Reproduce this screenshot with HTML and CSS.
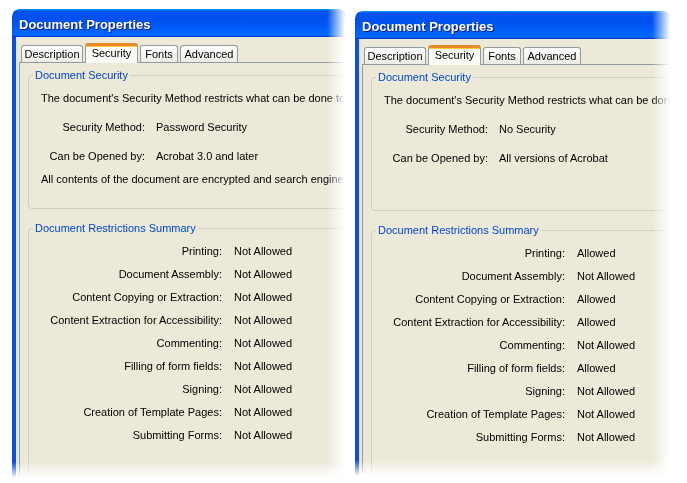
FILE: index.html
```html
<!DOCTYPE html>
<html>
<head>
    <title>Document Properties - Security</title>
    <link rel="stylesheet" href="styles.css">
</head>
<body>
    <div class="desk">
        <div class="window">
            <div class="titlebar">Document Properties</div>
            <div class="frame">
                <div class="tabs">
                    <span class="tab tab-description">Description</span>
                    <span class="tab tab-security active">Security</span>
                    <span class="tab tab-fonts">Fonts</span>
                    <span class="tab tab-advanced">Advanced</span>
                </div>
                <div class="panel">
                    <fieldset class="group group-security">
                        <legend>Document Security</legend>
                        <p class="intro">The document's Security Method restricts what can be done to the document. To remove security restrictions, set the Security Method to No Security.</p>
                        <div class="pairs">
                            <span class="key">Security Method:</span><span>Password Security</span>
                            <span class="key">Can be Opened by:</span><span>Acrobat 3.0 and later</span>
                        </div>
                        <p class="note">All contents of the document are encrypted and search engines cannot access the document's metadata.</p>
                    </fieldset>
                    <fieldset class="group group-rules">
                        <legend>Document Restrictions Summary</legend>
                        <div class="rules">
                            <span class="key">Printing:</span><span>Not Allowed</span>
                            <span class="key">Document Assembly:</span><span>Not Allowed</span>
                            <span class="key">Content Copying or Extraction:</span><span>Not Allowed</span>
                            <span class="key">Content Extraction for Accessibility:</span><span>Not Allowed</span>
                            <span class="key">Commenting:</span><span>Not Allowed</span>
                            <span class="key">Filling of form fields:</span><span>Not Allowed</span>
                            <span class="key">Signing:</span><span>Not Allowed</span>
                            <span class="key">Creation of Template Pages:</span><span>Not Allowed</span>
                            <span class="key">Submitting Forms:</span><span>Not Allowed</span>
                        </div>
                    </fieldset>
                </div>
            </div>
        </div>

        <div class="window window-second">
            <div class="titlebar">Document Properties</div>
            <div class="frame">
                <div class="tabs">
                    <span class="tab tab-description">Description</span>
                    <span class="tab tab-security active">Security</span>
                    <span class="tab tab-fonts">Fonts</span>
                    <span class="tab tab-advanced">Advanced</span>
                </div>
                <div class="panel">
                    <fieldset class="group group-security">
                        <legend>Document Security</legend>
                        <p class="intro">The document's Security Method restricts what can be done to the document. To add security to the document, set the Security Method.</p>
                        <div class="pairs">
                            <span class="key">Security Method:</span><span>No Security</span>
                            <span class="key">Can be Opened by:</span><span>All versions of Acrobat</span>
                        </div>
                    </fieldset>
                    <fieldset class="group group-rules">
                        <legend>Document Restrictions Summary</legend>
                        <div class="rules">
                            <span class="key">Printing:</span><span>Allowed</span>
                            <span class="key">Document Assembly:</span><span>Not Allowed</span>
                            <span class="key">Content Copying or Extraction:</span><span>Allowed</span>
                            <span class="key">Content Extraction for Accessibility:</span><span>Allowed</span>
                            <span class="key">Commenting:</span><span>Not Allowed</span>
                            <span class="key">Filling of form fields:</span><span>Allowed</span>
                            <span class="key">Signing:</span><span>Not Allowed</span>
                            <span class="key">Creation of Template Pages:</span><span>Not Allowed</span>
                            <span class="key">Submitting Forms:</span><span>Not Allowed</span>
                        </div>
                    </fieldset>
                </div>
            </div>
        </div>
    </div>
</body>
</html>
```

FILE: styles.css
```css
body {
    margin: 0;
    background: #fff;
    font-family: 'Liberation Sans', Arial, sans-serif;
    font-size: 11px;
    line-height: 13px;
    color: #000;
}

.desk {
    display: flex;
    align-items: flex-start;
    gap: 10px;
    padding: 9px 0 0 12px;
}

/* cropped window, fades out to the right and bottom */
.window {
    width: 333px;
    height: 469px;
    overflow: hidden;
    border-radius: 7px 7px 0 0;
    -webkit-mask-image: linear-gradient(to right, #000 calc(100% - 18px), transparent), linear-gradient(to bottom, #000 calc(100% - 16px), transparent);
    -webkit-mask-composite: source-in;
    mask-image: linear-gradient(to right, #000 calc(100% - 18px), transparent), linear-gradient(to bottom, #000 calc(100% - 16px), transparent);
    mask-composite: intersect;
}

.window-second {
    width: 315px;
    height: 465px;
    margin-top: 2px;
}

.titlebar {
    height: 28px;
    line-height: 32px;
    padding-left: 7px;
    color: #fff;
    font-size: 13px;
    font-weight: bold;
    text-shadow: 1px 1px #0f1a8a;
    background: linear-gradient(180deg, #0997ff, #0053ee 8%, #0050ee 40%, #0066ff 88%, #0066ff 93%, #005bff 95%, #003dd7 96%, #003dd7);
}

.frame {
    width: 700px;
    height: 100%;
    background: #ece9d8;
    border-left: 4px solid #0b4fe3;
    padding: 6px 0 0 3px;
}

.tabs {
    display: flex;
    align-items: flex-end;
    gap: 2px;
    height: 19px;
    padding-left: 2px;
    position: relative;
    z-index: 1;
}

.tab {
    box-sizing: border-box;
    height: 17px;
    line-height: 17px;
    text-align: center;
    border: 1px solid #919b9c;
    border-bottom: none;
    border-radius: 3px 3px 0 0;
    background: linear-gradient(#fff, #ecebe6);
}

.tab-description { width: 62px; }
.tab-security { width: 53px; }
.tab-fonts { width: 38px; }
.tab-advanced { width: 58px; }

.tab.active {
    height: 20px;
    line-height: 15px;
    border-top: 3px solid #e68b2c;
    box-shadow: inset 0 1px 0 #ffc73c;
    background: #fafaf6;
    margin-bottom: -1px;
}

.panel {
    height: 500px;
    border: 1px solid #919b9c;
    padding: 6px 0 0 8px;
}

.group {
    margin: 0;
    padding: 0 0 0 12px;
    border: 1px solid #d0d0bf;
    border-radius: 4px;
    white-space: nowrap;
}

.group legend {
    color: #0046d5;
    padding: 0 2px;
    margin-left: -8px;
}

.group-security {
    height: 140px;
    box-sizing: border-box;
}

.group-rules {
    margin-top: 13px;
    height: 320px;
    box-sizing: border-box;
}

.intro {
    margin: 10px 0 16px;
}

.note {
    margin: 10px 0 0;
}

.pairs {
    display: grid;
    grid-template-columns: 104px auto;
    column-gap: 11px;
    row-gap: 16px;
}

.rules {
    display: grid;
    grid-template-columns: 181px auto;
    column-gap: 12px;
    row-gap: 10px;
    padding-top: 10px;
}

.key {
    text-align: right;
}
```
